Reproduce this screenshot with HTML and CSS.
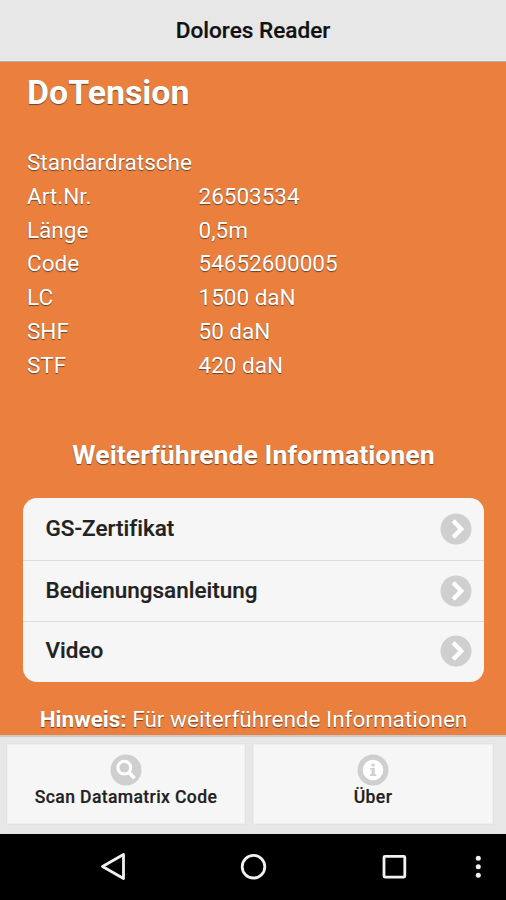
FILE: index.html
```html
<!DOCTYPE html>
<html lang="de">
<head>
<meta charset="utf-8">
<title>Dolores Reader</title>
<link rel="stylesheet" href="styles.css">
</head>
<body>
<svg class="defs" width="0" height="0">
  <symbol id="chevron" viewBox="0 0 32 32"><circle cx="16" cy="16" r="15.5" fill="#cfcfcf"/><path d="M13.200 7.700L21.200 16l-8 8.300" fill="none" stroke="#fff" stroke-width="4.400"/></symbol>
</svg>
<header class="header"><h1 class="header-title">Dolores Reader</h1></header>
<main class="content">
  <h2 class="product">DoTension</h2>
  <dl class="details">
    <dt class="wide">Standardratsche</dt>
    <dt>Art.Nr.</dt><dd>26503534</dd>
    <dt>Länge</dt><dd>0,5m</dd>
    <dt>Code</dt><dd>54652600005</dd>
    <dt>LC</dt><dd>1500 daN</dd>
    <dt>SHF</dt><dd>50 daN</dd>
    <dt>STF</dt><dd>420 daN</dd>
  </dl>
  <h3 class="more">Weiterführende Informationen</h3>
  <ul class="list">
    <li><span>GS-Zertifikat</span><svg class="icon"><use href="#chevron"/></svg></li>
    <li><span>Bedienungsanleitung</span><svg class="icon"><use href="#chevron"/></svg></li>
    <li><span>Video</span><svg class="icon"><use href="#chevron"/></svg></li>
  </ul>
  <p class="hint"><b>Hinweis:</b> Für weiterführende Informationen</p>
</main>
<footer class="footer">
  <div class="button">
    <svg class="icon" viewBox="0 0 32 32"><circle cx="16" cy="16" r="15.500" fill="#cfcfcf"/><circle cx="14.300" cy="13.700" r="6.400" fill="none" stroke="#fff" stroke-width="3"/><path d="M19 18.500l5.500 5.800" stroke="#fff" stroke-width="3.600"/></svg>
    <span>Scan Datamatrix Code</span>
  </div>
  <div class="button">
    <svg class="icon" viewBox="0 0 32 32"><circle cx="16" cy="16" r="15.500" fill="#cfcfcf"/><circle cx="16" cy="16" r="10.300" fill="#fff"/><path d="M14.500 9.800h3.200v2.600h-3.200zM13 14h4.700v6.300h1.600v1.600H13v-1.600h1.600v-4.700H13z" fill="#cfcfcf"/></svg>
    <span>Über</span>
  </div>
</footer>
<nav class="system">
  <svg viewBox="0 0 506 66" width="506" height="66" fill="none" stroke="#f2f2f2" stroke-width="2.800" stroke-linejoin="round">
    <path d="M102.500 32.500L123.500 20.500v24z"/>
    <circle cx="253.500" cy="32.700" r="11.300"/>
    <rect x="384" y="22.300" width="20.800" height="20.800" rx="1"/>
    <g fill="#f2f2f2" stroke="none"><circle cx="478.300" cy="24.300" r="2.500"/><circle cx="478.300" cy="32.800" r="2.500"/><circle cx="478.300" cy="41.300" r="2.500"/></g>
  </svg>
</nav>
</body>
</html>
```
FILE: styles.css
```css
* { box-sizing: border-box; margin: 0; padding: 0; }

body {
  width: 506px;
  height: 900px;
  overflow: hidden;
  display: flex;
  flex-direction: column;
  background: #eb803e;
  color: #222;
  font: 22.5px/33.75px Roboto, sans-serif;
  font-variant-ligatures: none;
}

.defs { position: absolute; }

.header {
  height: 62px;
  flex: none;
  background: #e7e7e7;
  border-bottom: 1px solid #abb2ad;
}

.header-title {
  font-size: 22.6px;
  font-weight: 500;
  line-height: 62px;
  text-align: center;
  color: #111;
  -webkit-text-stroke: 0.2px;
}

.content {
  height: 673px;
  flex: none;
  padding: 0 22px 0 23px;
  overflow: hidden;
  color: #fff;
  text-shadow: 0 1.4px 1px rgba(55, 45, 40, 0.75);
}

.product {
  height: 84px;
  padding: 10px 4px 0;
  font-size: 33.9px;
  line-height: 42px;
  font-weight: 700;
}

.details {
  display: grid;
  grid-template-columns: 171.5px 1fr;
  grid-auto-rows: 33.75px;
  padding-left: 4px;
}

.wide { grid-column: 1 / -1; }

.more {
  margin: 56px 0 25px;
  font-size: 26.7px;
  line-height: 35px;
  font-weight: 700;
  text-align: center;
}

.list {
  height: 184px;
  display: grid;
  grid-template-rows: 62px 60.5px 61.5px;
  border-radius: 14px;
  background: #f6f6f6;
  color: #222;
  text-shadow: none;
  list-style: none;
  font-weight: 500;
  -webkit-text-stroke: 0.2px;
}

.list li {
  display: flex;
  align-items: center;
  justify-content: space-between;
  padding: 0 12px 0 22.5px;
}

.list li:last-child { padding-bottom: 2px; }

.list li + li { border-top: 1px solid #ddd; }

.icon { display: block; width: 32px; height: 32px; flex: none; }

.hint { margin-top: 20.5px; text-align: center; white-space: nowrap; }

.footer {
  height: 99px;
  flex: none;
  display: grid;
  grid-template-columns: 238px 240px;
  column-gap: 8px;
  padding: 7px 0 8px 7px;
  background: #e7e7e7;
  border-top: 2px solid #c8cbca;
}

.button {
  display: flex;
  flex-direction: column;
  align-items: center;
  height: 80px;
  padding-top: 9px;
  background: #f6f6f6;
  border: 1px solid #f0f0f0;
  box-shadow: 0 0 1px #ccc;
  font-size: 17.6px;
  font-weight: 500;
  line-height: 23px;
  letter-spacing: 0.36px;
  -webkit-text-stroke: 0.2px;
}

.system { height: 66px; flex: none; background: #000; }
.system svg { display: block; }
```
